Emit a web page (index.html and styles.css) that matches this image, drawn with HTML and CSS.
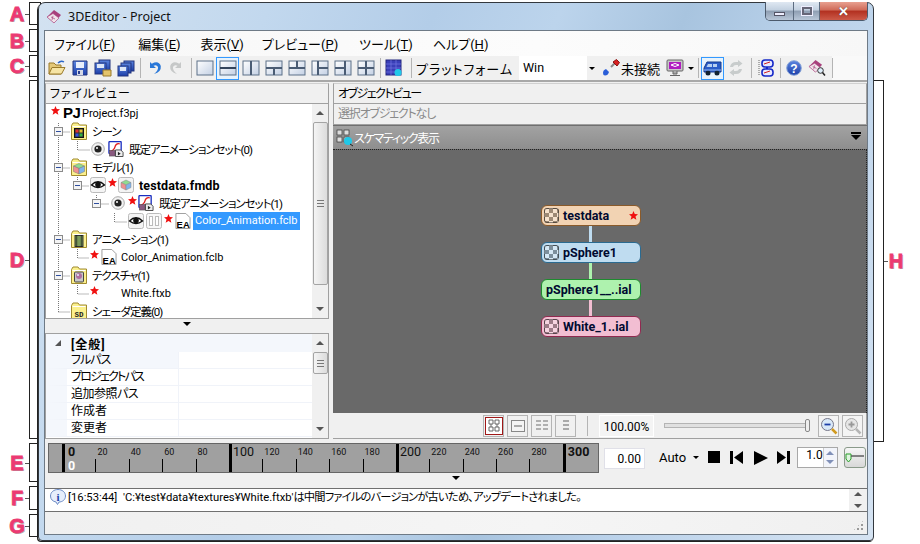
FILE: index.html
```html
<!DOCTYPE html>
<html lang="ja">
<head>
<meta charset="utf-8">
<title>3DEditor - Project</title>
<link rel="stylesheet" href="styles.css">
</head>
<body>
<svg class="defs" width="0" height="0">
  <defs>
    <linearGradient id="gBox" x1="0" y1="0" x2="1" y2="1"><stop offset="0" stop-color="#fff"/><stop offset="1" stop-color="#c3d0e4"/></linearGradient>
    <linearGradient id="gBlue" x1="0" y1="0" x2="0" y2="1"><stop offset="0" stop-color="#5c86e0"/><stop offset="1" stop-color="#1c3ea8"/></linearGradient>
    <symbol id="star" viewBox="0 0 10 10"><polygon points="5,0 6.4,3.4 10,3.6 7.2,6 8.2,9.8 5,7.7 1.8,9.8 2.8,6 0,3.6 3.6,3.4" fill="#f01010"/></symbol>
    <symbol id="folder" viewBox="0 0 16 18"><path d="M.5 3.500 L2 1 H7 L8.500 3 H15.500 V17.500 H.5Z" fill="#fbf08c" stroke="#a08a30"/><path d="M1.500 4.500H14.500" stroke="#fff"/></symbol>
    <symbol id="fd-scene" viewBox="0 0 16 18"><use href="#folder"/><rect x="3.500" y="6.500" width="9" height="9" fill="#333" stroke="#111"/><rect x="4.500" y="7.500" width="3" height="3" fill="#e03030"/><rect x="8.500" y="7.500" width="3" height="3" fill="#e0c030"/><rect x="4.500" y="11.500" width="3" height="3" fill="#3050e0"/><rect x="8.500" y="11.500" width="3" height="3" fill="#30b040"/></symbol>
    <symbol id="fd-model" viewBox="0 0 16 18"><use href="#folder"/><path d="M8 5.500 L13.500 8 L8 10.500 L2.500 8Z" fill="#8fdc8f" stroke="#777" stroke-width=".5"/><path d="M2.500 8 L8 10.500 V16 L2.500 13.500Z" fill="#f09090" stroke="#777" stroke-width=".5"/><path d="M13.500 8 L8 10.500 V16 L13.500 13.500Z" fill="#7fb4ec" stroke="#777" stroke-width=".5"/></symbol>
    <symbol id="fd-anim" viewBox="0 0 16 18"><use href="#folder"/><rect x="4" y="5.500" width="8" height="11" fill="#7a9a5a" stroke="#333"/><path d="M5.500 5.500V16.500M10.500 5.500V16.500" stroke="#111" stroke-dasharray="1 1" stroke-width="1.500"/></symbol>
    <symbol id="fd-tex" viewBox="0 0 16 18"><use href="#folder"/><rect x="3.500" y="6" width="9" height="10" rx="1" fill="#c8c8c8" stroke="#444"/><circle cx="8" cy="10" r="3" fill="#b070a0"/><circle cx="7" cy="9" r="1" fill="#e6f0ff"/></symbol>
    <symbol id="fd-sd" viewBox="0 0 16 18"><use href="#folder"/><text x="8" y="14.500" class="sd-t">SD</text></symbol>
    <symbol id="minus" viewBox="0 0 9 9"><rect x=".5" y=".5" width="8" height="8" fill="#f4f4f4" stroke="#8a8a8a"/><path d="M2 4.500H7" stroke="#2e4e9e"/></symbol>
    <symbol id="radio" viewBox="0 0 14 14"><circle cx="7" cy="7" r="6.300" fill="#f2f2f2" stroke="#aaa"/><circle cx="7" cy="7" r="3.600" fill="#222"/><circle cx="6" cy="6" r="1" fill="#fff"/></symbol>
    <symbol id="eyebox" viewBox="0 0 16 16"><rect x=".5" y=".5" width="15" height="15" rx="2" fill="#f4f4f4" stroke="#bbb"/><path d="M1.500 8 Q8 1.500 14.500 8 Q8 13 1.500 8Z" fill="#fff" stroke="#111" stroke-width="1.400"/><circle cx="8" cy="7.600" r="2.800" fill="#111"/></symbol>
    <symbol id="pausebox" viewBox="0 0 16 16"><rect x=".5" y=".5" width="15" height="15" rx="2" fill="#f8f8f8" stroke="#bbb"/><rect x="3.500" y="3.500" width="3" height="9" fill="#fff" stroke="#bbb"/><rect x="9.500" y="3.500" width="3" height="9" fill="#fff" stroke="#bbb"/></symbol>
    <symbol id="anim" viewBox="0 0 16 17"><rect x=".5" y=".5" width="13" height="13" rx="1" fill="#fff" stroke="#1b2fc0" stroke-width="1.400"/><path d="M2 11 Q6 10 7 6 T12 3" fill="none" stroke="#e02020" stroke-width="1.400"/><rect x="1" y="10" width="6" height="6" fill="#8a5a80" stroke="#444" stroke-width=".5"/><path d="M7.500 9.500 H13 L15.500 12 V16.500 H7.500Z" fill="#eee" stroke="#444"/><path d="M10 11.500 L13 13.500 L10 15.500Z" fill="#222"/></symbol>
    <symbol id="cube" viewBox="0 0 16 16"><rect x=".5" y=".5" width="15" height="15" rx="2" fill="#f4f4f4" stroke="#bbb"/><path d="M8 3 L13 5.500 L8 8 L3 5.500Z" fill="#8fdc8f" stroke="#888" stroke-width=".5"/><path d="M3 5.500 L8 8 V13 L3 10.500Z" fill="#f09090" stroke="#888" stroke-width=".5"/><path d="M13 5.500 L8 8 V13 L13 10.500Z" fill="#7fb4ec" stroke="#888" stroke-width=".5"/></symbol>
    <symbol id="ea" viewBox="0 0 16 17"><path d="M.5 .5 H11 L15.500 5 V16.500 H.5Z" fill="#fff" stroke="#999"/><text x="1" y="15.500" class="ea-t">E</text><text x="8" y="15.500" class="ea-t">A</text></symbol>
    <symbol id="open" viewBox="0 0 18 18"><path d="M1 4H6L8 6H13V15H1Z" fill="#e4c878" stroke="#9a7a2a"/><path d="M1 15L4 8.500H17L13.500 15Z" fill="#f6e4a4" stroke="#9a7a2a"/><path d="M10 4 Q13 1 16 3" fill="none" stroke="#2a66c8" stroke-width="1.500"/></symbol>
    <symbol id="save" viewBox="0 0 18 18"><path d="M2 2H16V16H2Z" fill="url(#gBlue)" stroke="#22357e"/><rect x="5" y="3" width="8" height="6" fill="#e8eefa"/><rect x="6" y="11" width="6" height="5" fill="#d5d9e6"/><rect x="7" y="12" width="2" height="3" fill="#2b3f8e"/></symbol>
    <symbol id="saveall" viewBox="0 0 18 18"><rect x="5" y="1" width="11" height="11" fill="url(#gBlue)" stroke="#22357e"/><rect x="1" y="4" width="11" height="11" fill="url(#gBlue)" stroke="#22357e"/><rect x="3" y="5" width="7" height="4" fill="#dde6f7"/><path d="M9 11H17V17H9Z" fill="#e4c46c" stroke="#9a7a2a"/></symbol>
    <symbol id="saveas" viewBox="0 0 18 18"><rect x="7" y="2" width="10" height="10" fill="url(#gBlue)" stroke="#22357e"/><rect x="4" y="4" width="10" height="10" fill="url(#gBlue)" stroke="#22357e"/><rect x="1" y="7" width="10" height="10" fill="url(#gBlue)" stroke="#22357e"/><rect x="3" y="8" width="6" height="4" fill="#dde6f7"/></symbol>
    <symbol id="undo" viewBox="0 0 16 16"><path d="M4 2V8H10 L7.500 5.800 Q10.500 4 12 7 Q12.500 10.500 8 14 Q15.500 12 14.800 6 Q12.500 0 5.800 3.800Z" fill="#2a78d8"/></symbol>
    <symbol id="redo" viewBox="0 0 16 16"><path d="M12 2V8H6 L8.500 5.800 Q5.500 4 4 7 Q3.500 10.500 8 14 Q.5 12 1.200 6 Q3.500 0 10.200 3.800Z" fill="#c6c8c8"/></symbol>
    <symbol id="lay0" viewBox="0 0 18 18"><rect x="1" y="2" width="16" height="14" fill="url(#gBox)" stroke="#5d7088"/></symbol>
    <symbol id="lay1" viewBox="0 0 18 18"><use href="#lay0"/><path d="M1 9H17" stroke="#33445c" stroke-width="2"/></symbol>
    <symbol id="lay2" viewBox="0 0 18 18"><use href="#lay0"/><path d="M9 2V16" stroke="#4a5c74" stroke-width="2"/></symbol>
    <symbol id="lay3" viewBox="0 0 18 18"><use href="#lay0"/><path d="M1 9H17M9 9V16" stroke="#4a5c74" stroke-width="2"/></symbol>
    <symbol id="lay4" viewBox="0 0 18 18"><use href="#lay0"/><path d="M1 9H17M9 2V9" stroke="#4a5c74" stroke-width="2"/></symbol>
    <symbol id="lay5" viewBox="0 0 18 18"><use href="#lay0"/><path d="M7 2V16M7 9H17" stroke="#4a5c74" stroke-width="2"/></symbol>
    <symbol id="lay6" viewBox="0 0 18 18"><use href="#lay0"/><path d="M11 2V16M1 9H11" stroke="#4a5c74" stroke-width="2"/></symbol>
    <symbol id="lay7" viewBox="0 0 18 18"><use href="#lay0"/><path d="M9 2V16M1 9H17" stroke="#4a5c74" stroke-width="2"/></symbol>
    <symbol id="db" viewBox="0 0 18 18"><rect x="1" y="1" width="15" height="15" fill="#3a3fb8" stroke="#22267e"/><path d="M1 5H16M1 9H16M1 13H16M6 1V16M11 1V16" stroke="#7276e2" stroke-width=".7"/><circle cx="13" cy="13.500" r="3.500" fill="#20c8e8"/></symbol>
    <symbol id="plug" viewBox="0 0 18 18"><path d="M1 14 Q1 11 4 10 L7 13 Q6 16.500 3 16.500 Q1 16.500 1 14Z" fill="#2a5ed8"/><path d="M9 8L13 4" stroke="#888" stroke-width="2"/><path d="M11 3 L14.500 .5 L17.500 3.500 L15 7Z" fill="#d82020" stroke="#811"/></symbol>
    <symbol id="monitor" viewBox="0 0 18 18"><rect x="1" y="1" width="16" height="11" rx="1" fill="#c8c8c8" stroke="#666"/><rect x="3" y="3" width="12" height="7" fill="#b01cc0"/><path d="M5 6 Q9 3 13 6 Q9 9 5 6Z" fill="none" stroke="#fff"/><path d="M7 12V15H11V12M4 16.500H14" fill="#aaa" stroke="#666"/></symbol>
    <symbol id="car" viewBox="0 0 20 18"><path d="M1 9 L4 3 H18 V13 H1Z" fill="#2a5cc8" stroke="#163a8c"/><path d="M5 5H9V8H3.500ZM10 5H14V8H10Z" fill="#b8d0f0"/><circle cx="5" cy="14" r="2.500" fill="#123"/><circle cx="14" cy="14" r="2.500" fill="#123"/><path d="M1 11H18" stroke="#8fb4ee"/></symbol>
    <symbol id="refresh" viewBox="0 0 16 16"><path d="M2 7 Q3 2 8 2 L10 2 V0 L14.500 3.500 L10 7 V5 H8 Q5.500 5 5 7Z M14 9 Q13 14 8 14 L6 14 V16 L1.500 12.500 L6 9 V11 H8 Q10.500 11 11 9Z" fill="#c8cccc"/></symbol>
    <symbol id="chain" viewBox="0 0 16 18"><path d="M1 1V17" stroke="#666" stroke-dasharray="1 1"/><rect x="4" y="1" width="11" height="7" rx="3" fill="#e8e8ff" stroke="#1428c8" stroke-width="1.600"/><rect x="4" y="10" width="11" height="7" rx="3" fill="#e8e8ff" stroke="#1428c8" stroke-width="1.600"/><path d="M6 5 L12 3M6 14 L12 12" stroke="#d02020"/><path d="M9 8V10" stroke="#1428c8" stroke-width="2"/></symbol>
    <symbol id="help" viewBox="0 0 16 16"><circle cx="8" cy="8" r="7.300" fill="url(#gBlue)" stroke="#87a4d8"/><text x="8" y="12.500" class="help-t">?</text></symbol>
    <symbol id="logo" viewBox="0 0 16 16"><path d="M8 1 L15 6 L8 14 L1 8Z" fill="#a8407c"/><path d="M1 8 L7 4.500 L13 9 L8 14Z" fill="#f0e4ea" stroke="#a8407c" stroke-width=".6"/><path d="M5 8L9 10M7 6.800L6 11" stroke="#a8407c" stroke-width=".7"/></symbol>
    <symbol id="logoz" viewBox="0 0 18 18"><use href="#logo" width="15" height="15"/><circle cx="12.500" cy="11.500" r="2.800" fill="#dfeefb" stroke="#333"/><path d="M14.500 13.500 L17 16.500" stroke="#222" stroke-width="1.500"/></symbol>
    <symbol id="info" viewBox="0 0 16 16"><path d="M8 .5 C12 .5 15.500 3 15.500 7 C15.500 11 12 13 9 13 L7.500 15.500 L6 13 C3 12.500 .5 10.500 .5 7 C.5 3 4 .5 8 .5Z" fill="#e6eefc" stroke="#6d8cc6"/><text x="8" y="11.500" class="info-t">i</text></symbol>
    <symbol id="schem" viewBox="0 0 18 18"><rect x="1" y="1" width="5" height="5" fill="#ddd" stroke="#333" stroke-width=".7"/><rect x="8" y="1" width="5" height="5" fill="#ddd" stroke="#333" stroke-width=".7"/><rect x="1" y="8" width="5" height="5" fill="#ddd" stroke="#333" stroke-width=".7"/><rect x="8" y="8" width="5" height="5" fill="#ddd" stroke="#333" stroke-width=".7"/><circle cx="12" cy="12" r="4" fill="#20c8e8"/><path d="M14 15L17 17" stroke="#222"/></symbol>
    <symbol id="grid1" viewBox="0 0 16 16"><path d="M3 2H7V6H3ZM9 2H13V6H9ZM3 9H7V13H3ZM9 9H13V13H9ZM5 6V9M11 6V9" fill="none" stroke="#666"/></symbol>
    <symbol id="grid2" viewBox="0 0 16 16"><rect x="1.500" y="2.500" width="13" height="11" fill="#f4f4f4" stroke="#888"/><rect x="4" y="7" width="8" height="2" fill="#aaa"/></symbol>
    <symbol id="grid3" viewBox="0 0 16 16"><path d="M2 3H7M2 7H7M2 11H7M9 3H14M9 7H14M9 11H14" stroke="#999" stroke-width="1.500"/></symbol>
    <symbol id="grid4" viewBox="0 0 16 16"><path d="M5 3H11M5 7H11M5 11H11" stroke="#aaa" stroke-width="2"/></symbol>
    <symbol id="zoomout" viewBox="0 0 18 18"><circle cx="7.500" cy="7.500" r="6" fill="#d8e8f8" stroke="#778"/><path d="M4.500 7.500H10.500" stroke="#1c3ea8" stroke-width="1.800"/><path d="M12 12L16.500 16.500" stroke="#d09a20" stroke-width="2.500"/></symbol>
    <symbol id="zoomin" viewBox="0 0 18 18"><circle cx="7.500" cy="7.500" r="6" fill="#e6e6e6" stroke="#aaa"/><path d="M4.500 7.500H10.500M7.500 4.500V10.500" stroke="#999" stroke-width="1.800"/><path d="M12 12L16.500 16.500" stroke="#b5b5b5" stroke-width="2.500"/></symbol>
    <symbol id="prev" viewBox="0 0 13 13"><rect x="0" y="0" width="3" height="13"/><path d="M13 0V13L4 6.500Z"/></symbol>
    <symbol id="next" viewBox="0 0 13 13"><rect x="10" y="0" width="3" height="13"/><path d="M0 0V13L9 6.500Z"/></symbol>
    <symbol id="play" viewBox="0 0 14 14"><path d="M0 0V14L14 7Z"/></symbol>
    <symbol id="pin" viewBox="0 0 20 14"><path d="M1 3H6V8L3.500 11L1 8Z" fill="#dff5df" stroke="#2aa02a"/><path d="M6 5H19" stroke="#555" stroke-width="1.400"/></symbol>
  </defs>
</svg>

<div class="ann ann-a"><b class="tag">A</b><i class="brk"></i></div>
<div class="ann ann-b"><b class="tag">B</b><i class="brk"></i></div>
<div class="ann ann-c"><b class="tag">C</b><i class="brk"></i></div>
<div class="ann ann-d"><b class="tag">D</b><i class="brk"></i></div>
<div class="ann ann-e"><b class="tag">E</b><i class="brk"></i></div>
<div class="ann ann-f"><b class="tag">F</b><i class="brk"></i></div>
<div class="ann ann-g"><b class="tag">G</b><i class="brk"></i></div>
<div class="ann ann-h"><i class="brk"></i><b class="tag">H</b></div>

<div class="window">
  <div class="titlebar">
    <svg class="ic16"><use href="#logo"/></svg>
    <span class="title">3DEditor - Project</span>
    <div class="caption">
      <span class="cap cap-min"><i></i></span>
      <span class="cap cap-max"><i></i></span>
      <span class="cap cap-close">✕</span>
    </div>
  </div>
  <div class="client">
    <nav class="menu">
      <span>ファイル(<u>F</u>)</span><span>編集(<u>E</u>)</span><span>表示(<u>V</u>)</span><span>プレビュー(<u>P</u>)</span><span>ツール(<u>T</u>)</span><span>ヘルプ(<u>H</u>)</span>
    </nav>
    <div class="toolbar">
      <span class="tb"><svg class="ic18"><use href="#open"/></svg></span>
      <span class="tb"><svg class="ic18"><use href="#save"/></svg></span>
      <span class="tb"><svg class="ic18"><use href="#saveall"/></svg></span>
      <span class="tb"><svg class="ic18"><use href="#saveas"/></svg></span>
      <i class="sep"></i>
      <span class="tb"><svg class="ic16"><use href="#undo"/></svg></span>
      <span class="tb"><svg class="ic16"><use href="#redo"/></svg></span>
      <i class="sep"></i>
      <span class="tb"><svg class="ic18"><use href="#lay0"/></svg></span>
      <span class="tb tb-on"><svg class="ic18"><use href="#lay1"/></svg></span>
      <span class="tb"><svg class="ic18"><use href="#lay2"/></svg></span>
      <span class="tb"><svg class="ic18"><use href="#lay3"/></svg></span>
      <span class="tb"><svg class="ic18"><use href="#lay4"/></svg></span>
      <span class="tb"><svg class="ic18"><use href="#lay5"/></svg></span>
      <span class="tb"><svg class="ic18"><use href="#lay6"/></svg></span>
      <span class="tb"><svg class="ic18"><use href="#lay7"/></svg></span>
      <i class="sep"></i>
      <span class="tb"><svg class="ic18"><use href="#db"/></svg></span>
      <i class="sep sep-l"></i>
      <span class="tb-label">プラットフォーム</span>
      <span class="combo">Win</span>
      <i class="drop"></i>
      <svg class="ic18 plug"><use href="#plug"/></svg>
      <span class="tb-status">未接続</span>
      <svg class="ic18 mon"><use href="#monitor"/></svg>
      <i class="drop drop2"></i>
      <i class="sep sep-w"></i>
      <span class="tb tb-on"><svg class="ic20"><use href="#car"/></svg></span>
      <span class="tb"><svg class="ic16"><use href="#refresh"/></svg></span>
      <i class="sep sep-w"></i>
      <span class="tb"><svg class="ic18"><use href="#chain"/></svg></span>
      <i class="sep"></i>
      <span class="tb"><svg class="ic16"><use href="#help"/></svg></span>
      <span class="tb"><svg class="ic18"><use href="#logoz"/></svg></span>
      <i class="sep sep-w"></i>
    </div>
    <div class="main">
      <section class="left">
        <header class="phead ph-file">ファイルビュー</header>
        <div class="tree">
          <svg class="tree-lines" width="266" height="215"><path d="M12.500 19V208M12.500 28H24M12.500 64H24M12.500 136H24M12.500 172H24M12.500 208H24M31.500 37V46H44M31.500 73V82H43M50.500 91V100H63M68.500 109V118H81M31.500 145V154H43M31.500 181V190H43"/></svg>
          <div class="rows">
            <div class="r in5"><svg class="st"><use href="#star"/></svg><b class="pj">PJ</b><span class="t fn t-pj">Project.f3pj</span></div>
            <div class="r in8"><svg class="mn"><use href="#minus"/></svg><svg class="fd"><use href="#fd-scene"/></svg><span class="t jp">シーン</span></div>
            <div class="r in45"><svg class="rd"><use href="#radio"/></svg><svg class="ic16 g3"><use href="#anim"/></svg><span class="t jp">既定アニメーションセット(0)</span></div>
            <div class="r in8"><svg class="mn"><use href="#minus"/></svg><svg class="fd"><use href="#fd-model"/></svg><span class="t jp">モデル(1)</span></div>
            <div class="r in27"><svg class="mn"><use href="#minus"/></svg><svg class="ic16 g8"><use href="#eyebox"/></svg><svg class="st g2"><use href="#star"/></svg><svg class="ic16 g1"><use href="#cube"/></svg><span class="t bold">testdata.fmdb</span></div>
            <div class="r in46"><svg class="mn"><use href="#minus"/></svg><svg class="rd g10"><use href="#radio"/></svg><svg class="st g3"><use href="#star"/></svg><svg class="ic16 g1"><use href="#anim"/></svg><span class="t jp">既定アニメーションセット(1)</span></div>
            <div class="r in82"><svg class="ic16"><use href="#eyebox"/></svg><svg class="ic16 g2"><use href="#pausebox"/></svg><svg class="st g2"><use href="#star"/></svg><svg class="ic16 g2"><use href="#ea"/></svg><span class="t fn sel">Color_Animation.fclb</span></div>
            <div class="r in8"><svg class="mn"><use href="#minus"/></svg><svg class="fd"><use href="#fd-anim"/></svg><span class="t jp">アニメーション(1)</span></div>
            <div class="r in44"><svg class="st"><use href="#star"/></svg><svg class="ic16 g2"><use href="#ea"/></svg><span class="t fn g4">Color_Animation.fclb</span></div>
            <div class="r in8"><svg class="mn"><use href="#minus"/></svg><svg class="fd"><use href="#fd-tex"/></svg><span class="t jp">テクスチャ(1)</span></div>
            <div class="r in44"><svg class="st"><use href="#star"/></svg><span class="t fn g22">White.ftxb</span></div>
            <div class="r in25"><svg class="fd"><use href="#fd-sd"/></svg><span class="t jp">シェーダ定義(0)</span></div>
          </div>
          <div class="vscroll">
            <i class="arr arr-up"></i>
            <div class="vtrack"><span class="thumb thumb-tree"><i class="grip"></i></span></div>
            <i class="arr arr-dn"></i>
          </div>
        </div>
        <div class="split"><i class="tri"></i></div>
        <div class="props">
          <div class="pgrid">
            <div class="pcat"><i class="exp"></i><b>[全般]</b></div>
            <div class="prow prow-first"><span class="pn kana">フルパス</span><span class="pv"></span></div>
            <div class="prow"><span class="pn kana2">プロジェクトパス</span><span class="pv"></span></div>
            <div class="prow"><span class="pn kana3">追加参照パス</span><span class="pv"></span></div>
            <div class="prow"><span class="pn">作成者</span><span class="pv"></span></div>
            <div class="prow"><span class="pn">変更者</span><span class="pv"></span></div>
          </div>
          <div class="vscroll">
            <i class="arr arr-up"></i>
            <div class="vtrack"><span class="thumb thumb-prop"><i class="grip"></i></span></div>
            <i class="arr arr-dn"></i>
          </div>
        </div>
      </section>
      <section class="right">
        <header class="phead ph-obj">オブジェクトビュー</header>
        <div class="psub">選択オブジェクトなし</div>
        <div class="schbar"><svg class="ic18"><use href="#schem"/></svg><span>スケマティック表示</span><i class="schmenu"></i></div>
        <div class="canvas">
          <div class="node n-a"><i class="chk"></i><span>testdata</span><svg class="nstar"><use href="#star"/></svg></div>
          <i class="link l-a"></i>
          <div class="node n-b"><i class="chk"></i><span>pSphere1</span></div>
          <i class="link l-b"></i>
          <div class="node n-c"><span>pSphere1__..ial</span></div>
          <i class="link l-c"></i>
          <div class="node n-d"><i class="chk"></i><span>White_1..ial</span></div>
        </div>
        <div class="schtools">
          <span class="sbtn sbtn-on"><svg class="ic16"><use href="#grid1"/></svg></span>
          <span class="sbtn"><svg class="ic16"><use href="#grid2"/></svg></span>
          <span class="sbtn"><svg class="ic16"><use href="#grid3"/></svg></span>
          <span class="sbtn"><svg class="ic16"><use href="#grid4"/></svg></span>
          <i class="sep sep-s"></i>
          <span class="zoomval">100.00%</span>
          <div class="slider"><i></i></div>
          <span class="sbtn sbtn-z"><svg class="ic18"><use href="#zoomout"/></svg></span>
          <span class="sbtn sbtn-z"><svg class="ic18"><use href="#zoomin"/></svg></span>
        </div>
      </section>
    </div>
    <div class="timebar">
      <div class="ruler">
        <div class="tc major first"><b>0</b><em>0</em></div>
        <div class="tc">20</div><div class="tc">40</div><div class="tc">60</div><div class="tc">80</div>
        <div class="tc major"><span>100</span></div>
        <div class="tc">120</div><div class="tc">140</div><div class="tc">160</div><div class="tc">180</div>
        <div class="tc major"><span>200</span></div>
        <div class="tc">220</div><div class="tc">240</div><div class="tc">260</div><div class="tc">280</div>
        <div class="tc major last"><b>300</b></div>
      </div>
      <span class="frame">0.00</span>
      <span class="auto">Auto</span><i class="drop drop3"></i>
      <i class="stop"></i>
      <svg class="tr t-prev"><use href="#prev"/></svg>
      <svg class="tr t-play"><use href="#play"/></svg>
      <svg class="tr t-next"><use href="#next"/></svg>
      <div class="spin"><span>1.0</span><div class="spinb"><i class="up"></i><i class="dn"></i></div></div>
      <span class="pinbtn"><svg class="ic20"><use href="#pin"/></svg></span>
    </div>
    <div class="split split-log"><i class="tri"></i></div>
    <div class="log">
      <svg class="ic16"><use href="#info"/></svg>
      <span class="logt">[16:53:44]&nbsp; 'C:¥test¥data¥textures¥White.ftxb'<span class="logj">は中間ファイルのバージョンが古いため、アップデートされました。</span></span>
      <div class="logs"><i class="arr arr-up"></i><i class="arr arr-dn"></i></div>
    </div>
    <div class="status"><i class="sizegrip"></i></div>
  </div>
</div>
</body>
</html>
```
FILE: styles.css
```css
* { box-sizing: border-box; }
html, body { margin: 0; padding: 0; }
body {
  width: 920px; height: 544px; overflow: hidden; background: #fff; position: relative;
  font-family: Roboto, "Noto Sans CJK JP", sans-serif; font-size: 12px; color: #000;
  font-feature-settings: "palt";
}
i, em { font-style: normal; }
.defs { position: absolute; }
svg { display: block; flex: none; }
.ea-t { font: bold 10px "Liberation Sans", sans-serif; fill: #000; }
.sd-t { font: bold 7.500px "Liberation Mono", monospace; fill: #222; text-anchor: middle; }
.help-t { font: bold 12px "Liberation Sans", sans-serif; fill: #fff; text-anchor: middle; }
.info-t { font: bold 11px "Liberation Serif", serif; fill: #1c3ea8; text-anchor: middle; }

/* callouts */
.ann { position: absolute; display: flex; align-items: center; }
.ann-a { left: 9px; top: 2px; height: 23px; width: 32px; }
.ann-b { left: 9px; top: 29px; height: 23px; width: 32px; }
.ann-c { left: 9px; top: 55px; height: 22px; width: 32px; }
.ann-d { left: 9px; top: 80px; height: 359px; width: 32px; }
.ann-e { left: 9px; top: 443px; height: 39px; width: 32px; }
.ann-f { left: 9px; top: 486px; height: 24px; width: 32px; }
.ann-g { left: 9px; top: 514px; height: 23px; width: 32px; }
.ann-h { left: 870px; top: 80px; height: 362px; width: 34px; }
.tag {
  width: 16px; flex: none; font: bold 20px/18px "Liberation Sans", sans-serif; color: #ec3a72; text-align: center;
  text-shadow: 1px 1px 0 #a8a8a8; -webkit-text-stroke: .8px #ec3a72;
}
.brk { flex: 1; align-self: stretch; border: 1px solid #222; position: relative; background: #fff; margin-left: 4px; }
.brk::before { content: ""; position: absolute; left: -5px; top: 50%; width: 4px; height: 1px; background: #555; }
.ann-h .brk { margin: 0 4px 0 0; border-left: 0; }
.ann-h .brk::before { left: auto; right: -5px; }

/* window */
.window {
  position: absolute; left: 38px; top: 2px; width: 836px; height: 539px; z-index: 2;
  border: 1px solid #33383e; border-radius: 7px 7px 4px 4px; padding: 0 5px 5px;
  display: flex; flex-direction: column;
  background: linear-gradient(112deg, #d3e2f1 0%, #c2d8ee 22%, #b3cde8 38%, #bcd4ec 50%, #a8c4df 62%, #b9d1ea 74%, #d5e3f2 100%);
  box-shadow: -1px 1px 0 #222;
}
.titlebar { height: 27px; flex: none; display: flex; align-items: center; padding: 0 0 0 2px; position: relative; }
.title { font-family: "Noto Sans", sans-serif; font-size: 12.500px; margin-left: 6px; color: #111; }
.caption { position: absolute; right: 0; top: -1px; display: flex; height: 19px; border: 1px solid #4c5a6c; border-top: 0; border-radius: 0 0 5px 5px; overflow: hidden; }
.cap { display: flex; align-items: center; justify-content: center; height: 100%; border-right: 1px solid #5c6c80; background: linear-gradient(#dfe8f2, #c2d0e0 45%, #8e9eb2 50%, #b8c6d8); }
.cap-min { width: 28px; }
.cap-min i { width: 11px; height: 4px; margin-top: 6px; background: #eef; border: 1px solid #556; }
.cap-max { width: 26px; }
.cap-max i { width: 10px; height: 8px; background: transparent; border: 2px solid #667; box-shadow: 0 0 0 1px #eef; }
.cap-close { width: 47px; border: 0; color: #fff; font-size: 13px; font-weight: bold; background: linear-gradient(#e8a090, #cf6a58 45%, #b23020 50%, #cc5a48); text-shadow: 0 0 1px #333; }

.client { flex: 1; min-height: 0; background: #f0f0f0; border: 1px solid #6e7a86; display: flex; flex-direction: column; }
.menu { height: 25px; flex: none; display: flex; align-items: center; padding-left: 9px; background: linear-gradient(90deg, #f7f7f7, #fcfcfc 60%, #f7f7f7); font-size: 13px; }
.menu span { margin-right: 21px; }
.menu span:nth-child(1) { margin-right: 23px; }
.menu span:nth-child(2) { margin-right: 20px; }
.menu span:nth-child(3) { margin-right: 18px; }
.menu span:nth-child(5) { margin-right: 20px; }
u { text-decoration: underline; }

.toolbar { height: 26px; flex: none; display: flex; align-items: center; background: linear-gradient(90deg, #f0f0f0 787px, #f9f9f9 787px); border-bottom: 2px solid #a8a8a8; }
.tb { width: 23px; height: 23px; flex: none; display: flex; align-items: center; justify-content: center; }
.tb-on { border: 1px solid #3399ff; background: #e8f3fc; }
.sep { width: 1px; height: 20px; background: #b4b4b4; margin: 0 1px 0 3px; flex: none; display: block; }
.sep-l { margin: 0 4px 0 6px; }
.sep-w { margin: 0 2px 0 4px; }
.ic16 { width: 16px; height: 16px; }
.ic18 { width: 18px; height: 18px; }
.ic20 { width: 20px; height: 18px; }
.tb-label { font-size: 13px; letter-spacing: 1px; width: 103px; flex: none; white-space: nowrap; }
.combo { width: 68px; height: 24px; line-height: 24px; background: #fff; padding-left: 4px; flex: none; font-size: 12.500px; }
.drop { width: 0; height: 0; border: 3px solid transparent; border-top: 3px solid #000; border-bottom: 0; margin-left: 2px; flex: none; display: block; }
.plug { margin-left: 7px; }
.tb-status { margin-left: 1px; width: 37px; flex: none; font-size: 13px; white-space: nowrap; }
.mon { margin-left: 8px; }
.drop2 { margin-left: 4px; }

/* panes */
.main { height: 358px; flex: none; display: flex; gap: 4px; padding: 1px 0; }
.left { width: 284px; flex: none; display: flex; flex-direction: column; }
.right { flex: 1; min-width: 0; display: flex; flex-direction: column; }
.phead { height: 21px; flex: none; line-height: 20px; padding-left: 4px; border: 1px solid #a0a0a0; border-top-color: #d0d0d0; background: #f0f0f0; font-size: 12px; }
.ph-file { letter-spacing: .9px; }
.ph-obj { letter-spacing: -1.500px; }
.tree { height: 215px; flex: none; position: relative; display: flex; background: #fff; border: 1px solid #a0a0a0; border-top: 0; overflow: hidden; }
.tree-lines { position: absolute; left: 0; top: 0; }
.tree-lines path { fill: none; stroke: #777; stroke-dasharray: 1 1; }
.rows { flex: 1; min-width: 0; position: relative; }
.r { height: 18px; display: flex; align-items: center; white-space: nowrap; }
.in5 { padding-left: 5px; } .in8 { padding-left: 8px; } .in25 { padding-left: 25px; } .in27 { padding-left: 27px; } .in44 { padding-left: 44px; } .in45 { padding-left: 45px; } .in46 { padding-left: 46px; } .in82 { padding-left: 82px; }
.st { width: 9px; height: 9px; align-self: flex-start; margin-top: 2px; }
.mn { width: 9px; height: 9px; }
.fd { width: 16px; height: 18px; margin-left: 8px; }
.in25 .fd { margin-left: 0; }
.rd { width: 14px; height: 14px; }
.g1 { margin-left: 1px; } .g2 { margin-left: 2px; } .g3 { margin-left: 3px; } .g8 { margin-left: 8px; } .g10 { margin-left: 10px; }
.pj { font: bold 15px/18px "Liberation Sans", sans-serif; margin-left: 3px; width: 16px; letter-spacing: -.5px; }
.t { margin-left: 5px; font-size: 12px; }
.jp { font-size: 11.500px; letter-spacing: -1px; }
.fn { font-size: 11px; }
.t-pj { margin-left: 3px; }
.t.g4 { margin-left: 4px; } .t.g22 { margin-left: 22px; }
.bold { font-weight: bold; font-size: 12.500px; letter-spacing: .1px; }
.sel { background: #3399ff; color: #fff; margin-left: 2px; width: 107px; height: 18px; line-height: 18px; padding-left: 2px; }
.vscroll { width: 16px; flex: none; display: flex; flex-direction: column; align-items: center; background: #f0f0f0; }
.arr { display: block; width: 0; height: 0; border: 4px solid transparent; flex: none; }
.arr-up { border-top: 0; border-bottom: 4px solid #555; margin: 7px 0; }
.arr-dn { border-bottom: 0; border-top: 4px solid #555; margin: 7px 0; }
.vtrack { flex: 1; width: 100%; min-height: 0; display: flex; flex-direction: column; align-items: center; }
.thumb { width: 15px; display: flex; align-items: center; justify-content: center; border: 1px solid #a4a4a4; border-radius: 2px; background: linear-gradient(90deg, #f4f4f4, #dcdcdc); }
.thumb-tree { height: 163px; }
.thumb-prop { height: 22px; }
.grip { width: 7px; height: 7px; border-top: 1px solid #777; border-bottom: 1px solid #777; position: relative; display: block; }
.grip::after { content: ""; position: absolute; left: 0; right: 0; top: 2px; height: 1px; background: #777; }
.split { height: 14px; flex: none; display: flex; justify-content: center; align-items: flex-start; padding-top: 3px; background: #f0f0f0; }
.tri { display: block; width: 0; height: 0; border: 4px solid transparent; border-top: 4px solid #000; border-bottom: 0; }
.props { flex: 1; min-height: 0; display: flex; border: 1px solid #a0a0a0; background: #fff; overflow: hidden; }
.pgrid { flex: 1; min-width: 0; background: #fff; }
.pcat { height: 18px; background: #f4f7fc; display: flex; align-items: center; padding-left: 9px; font-size: 12px; }
.pcat b { margin-left: 10px; letter-spacing: 1px; }
.exp { width: 0; height: 0; border-style: solid; border-width: 0 0 6px 6px; border-color: transparent transparent #555 transparent; display: block; }
.prow { height: 17px; display: flex; border-left: 21px solid #f4f7fc; border-bottom: 1px solid #f0f3f9; font-size: 12px; line-height: 16px; }
.pn { width: 112px; flex: none; border-right: 1px solid #f0f3f9; padding-left: 4px; white-space: nowrap; }
.pv { flex: 1; }
.kana { letter-spacing: -1px; }
.kana2 { letter-spacing: -1.800px; }
.kana3 { letter-spacing: -.5px; }
.prow-first .pn { background: #f4f7fc; }

.psub { height: 21px; flex: none; line-height: 20px; padding-left: 4px; color: #8a8a8a; background: #f0f0f0; border: 1px solid #a0a0a0; border-top: 0; font-size: 12px; letter-spacing: -1.200px; }
.schbar { height: 24px; flex: none; display: flex; align-items: center; padding-left: 3px; color: #fff; font-size: 12px; letter-spacing: -1.300px; background: linear-gradient(#a2a2a2, #8e8e8e); border-top: 1px solid #707070; position: relative; }
.schmenu { position: absolute; right: 6px; top: 9px; width: 0; height: 0; border: 5px solid transparent; border-top: 5px solid #000; border-bottom: 0; }
.schmenu::before { content: ""; position: absolute; left: -5px; top: -8px; width: 10px; height: 2px; background: #000; }
.canvas { height: 264px; flex: none; background: #696969; border: 1px dotted #222; border-bottom: 0; border-left: 0; padding: 55px 0 0 208px; display: flex; flex-direction: column; align-items: flex-start; }
.node { width: 100px; height: 21px; flex: none; border-radius: 6px; border: 1px solid; display: flex; align-items: center; padding-left: 2px; gap: 4px; font-size: 12.500px; font-weight: bold; color: #000a30; position: relative; white-space: nowrap; }
.chk { width: 15px; height: 15px; border-radius: 3px; border: 1px solid rgba(0,0,0,.45); background: repeating-conic-gradient(rgba(0,0,0,.35) 0 25%, rgba(255,255,255,.35) 0 50%) 0 0 / 8px 8px; display: block; flex: none; }
.nstar { width: 9px; height: 9px; position: absolute; right: 2px; top: 5px; }
.n-a { background: #f2d3b3; border-color: #8a5a2a; }
.n-b { background: #bfdcf0; border-color: #2a6a90; }
.n-c { background: #aef2ae; border-color: #1e8a2e; padding-left: 4px; }
.n-d { background: #f2bed2; border-color: #902a50; }
.link { display: block; width: 3px; height: 16px; margin-left: 48px; flex: none; }
.l-a { background: #bfdcf0; } .l-b { background: #aef2ae; } .l-c { background: #f2bed2; }
.schtools { flex: 1; min-height: 0; display: flex; align-items: center; padding-left: 150px; background: #f0f0f0; border-bottom: 1px solid #a0a0a0; border-right: 1px solid #a0a0a0; }
.sbtn { width: 21px; height: 22px; margin-right: 3px; flex: none; border: 1px solid #b4b4b4; display: flex; align-items: center; justify-content: center; }
.sbtn-on svg { outline: 1px solid #a01818; background: #fff; }
.sbtn-z { margin: 0 0 0 3px; background: #f4f4f4; }
.sep-s { margin: 0 11px 0 8px; }
.zoomval { width: 55px; height: 22px; flex: none; line-height: 22px; text-align: center; background: #f4f4f4; border: 1px solid #fff; font-size: 12px; }
.slider { width: 146px; margin: 0 5px 0 10px; height: 14px; position: relative; display: flex; align-items: center; flex: none; }
.slider::before { content: ""; height: 3px; width: 144px; background: #e0e0e0; border: 1px solid #b4b4b4; }
.slider i { position: absolute; left: 141px; top: 0; width: 5px; height: 13px; border: 1px solid #888; border-radius: 2px; background: #eee; }

/* timeline */
.timebar { height: 33px; flex: none; display: flex; align-items: flex-start; padding: 3px 0 0 3px; background: #f0f0f0; position: relative; }
.ruler { width: 551px; height: 30px; flex: none; background: #a0a0a0; border: 1px solid #666; display: flex; padding-left: 13px; overflow: hidden; font-size: 9px; color: #111; }
.tc { flex: none; width: 33.400px; height: 100%; position: relative; padding: 2px 0 0 2px; line-height: 12px; }
.tc::before { content: ""; position: absolute; left: 0; bottom: 0; width: 1px; height: 13px; background: #000; }
.major { padding-left: 4px; font-size: 12.500px; }
.major::before { width: 3px; height: 100%; }
.first { padding-left: 6px; }
.last { padding-left: 5px; }
.major b { display: block; line-height: 11px; }
.major em { display: block; color: #fff; font-weight: bold; line-height: 11px; margin-top: 3px; }
.frame { width: 41px; height: 21px; margin: 5px 0 0 5px; background: #fff; border: 1px solid #e0e0e8; text-align: right; padding-right: 3px; line-height: 20px; font-size: 12px; flex: none; }
.auto { margin: 6px 0 0 14px; font-size: 13px; line-height: 17px; }
.drop3 { margin: 13px 0 0 7px; }
.stop { width: 12px; height: 12px; background: #000; margin: 8px 0 0 9px; flex: none; display: block; }
.tr { width: 13px; height: 13px; fill: #000; margin-top: 8px; }
.t-prev { margin-left: 10px; }
.t-play { margin-left: 11px; width: 14px; height: 14px; }
.t-next { margin-left: 9px; }
.spin { margin: 4px 0 0 7px; width: 41px; height: 21px; border: 1px solid #a8a8a8; background: #fff; display: flex; justify-content: space-between; padding-left: 8px; font-size: 12px; line-height: 15px; flex: none; }
.spinb { width: 15px; border-left: 1px solid #ccc; display: flex; flex-direction: column; align-items: center; justify-content: space-around; background: #f2f4fa; }
.spinb i { display: block; width: 0; height: 0; border: 4px solid transparent; }
.spinb .up { border-top: 0; border-bottom: 4px solid #8090b8; }
.spinb .dn { border-bottom: 0; border-top: 4px solid #8090b8; }
.pinbtn { margin: 4px 0 0 6px; width: 22px; height: 21px; border: 1px solid #8a9a8a; border-radius: 3px; display: flex; align-items: center; justify-content: center; background: linear-gradient(#f6f6f6, #d8d8d8); flex: none; }
.split-log { height: 15px; }
.log { height: 24px; flex: none; background: #fff; border-top: 1px solid #707070; border-bottom: 1px solid #707070; display: flex; align-items: flex-start; padding-left: 5px; position: relative; }
.logt { margin-left: 2px; font-size: 11.250px; line-height: 18px; white-space: nowrap; }
.logj { letter-spacing: -.8px; }
.logs { position: absolute; right: 0; top: 0; bottom: 0; width: 18px; background: #f0f0f0; display: flex; flex-direction: column; align-items: center; justify-content: space-between; }
.logs .arr { margin: 3px 0; }
.status { flex: 1; min-height: 0; position: relative; background: linear-gradient(90deg, #f0f0f0, #f5f5f5 60%, #f0f0f0); }
.sizegrip { position: absolute; right: 3px; bottom: 3px; width: 11px; height: 11px; background: radial-gradient(circle at 1px 1px, #999 1px, transparent 1.200px) 0 0 / 4px 4px; clip-path: polygon(100% 0, 100% 100%, 0 100%); }
```
